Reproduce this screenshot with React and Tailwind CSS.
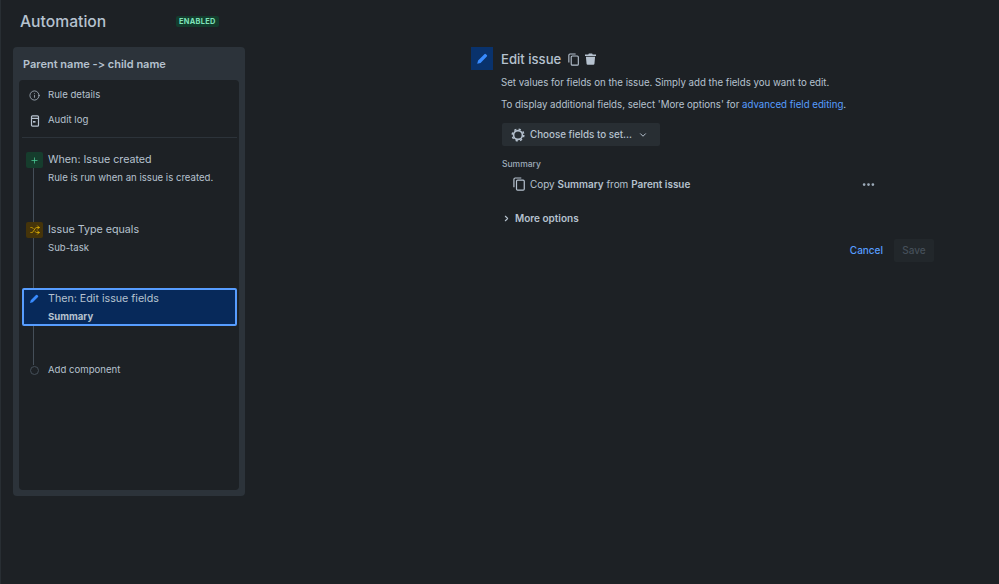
import { ChevronDown, ChevronRight, Info, MoreHorizontal, Plus, Shuffle } from "lucide-react";

function PencilIcon({ className }) {
  return (
    <svg className={className} viewBox="0 0 16 16" fill="currentColor">
      <path d="M11.2 1.6a1.4 1.4 0 0 1 2 0l1.2 1.2a1.4 1.4 0 0 1 0 2L6 13.2 1.6 14.4 2.8 10z" />
    </svg>
  );
}

function AuditIcon() {
  return (
    <svg className="w-[10px] h-[12px] text-[#b6c2cf]" viewBox="0 0 10 12" fill="none" stroke="currentColor" strokeWidth="1.2">
      <rect x="1.5" y="0.8" width="7" height="10.4" rx="1" />
      <path d="M1.5 3.4h7" />
      <path d="M3 6h2.5v1.6H3z" fill="currentColor" stroke="none" />
    </svg>
  );
}

function CopyIcon({ className }) {
  return (
    <svg className={className} viewBox="0 0 13 15" fill="none" stroke="currentColor" strokeWidth="1.3">
      <path d="M1 11V2.4A1.4 1.4 0 0 1 2.4 1H9" />
      <rect x="3.8" y="3.4" width="8.4" height="10.8" rx="1.2" />
    </svg>
  );
}

function TrashIcon({ className }) {
  return (
    <svg className={className} viewBox="0 0 12 13" fill="currentColor">
      <path d="M4.2 0.5h3.6l.6 1.1H12v1.5H0V1.6h3.6z" />
      <path d="M1 4h10l-.7 7.8a1.2 1.2 0 0 1-1.2 1.1H2.9a1.2 1.2 0 0 1-1.2-1.1z" />
    </svg>
  );
}

function GearIcon({ className }) {
  return (
    <svg className={className} viewBox="0 0 14 14" fill="none" stroke="currentColor">
      <circle cx="7" cy="7" r="4.4" strokeWidth="1.6" />
      <circle cx="7" cy="7" r="5.8" strokeWidth="1.5" strokeDasharray="2.2 2.35" />
    </svg>
  );
}

function Step({ icon, title, sub, box, bold, selected }) {
  return (
    <div
      className={
        selected
          ? "relative flex h-[38px] items-center rounded-[2px] border-2 border-[#579dff] bg-[#07295a] pt-[1px]"
          : "relative flex h-[38px] items-center"
      }
    >
      <div className={selected ? "flex h-full w-[24px] justify-center pr-[5px]" : "flex h-full w-[26px] justify-center pt-[2px] pr-[1px]"}>
        <div className={"flex h-[16px] w-[17px] items-center justify-center rounded-[2px] " + box}>{icon}</div>
      </div>
      <div className="flex flex-col">
        <span className="text-[10.7px] leading-[18px] text-[#b6c2cf]">{title}</span>
        <span className={"text-[9.6px] leading-[18px] text-[#b6c2cf] " + (bold ? "font-bold" : "")}>{sub}</span>
      </div>
    </div>
  );
}

export default function App() {
  return (
    <div className="flex h-[584px] w-[999px] overflow-hidden border-l border-[#282e33] bg-[#1d2125] font-['Inter',sans-serif] text-[#b6c2cf]">
      <aside className="flex w-[470px] shrink-0 flex-col pl-[12px]">
        <div className="flex h-[47px] items-center pb-[4px] pl-[7px]">
          <h1 className="w-[156px] text-[15.7px] font-medium text-[#b6c2cf]">Automation</h1>
          <span className="rounded-[2px] bg-[#133d2d] px-[3px] text-[7.4px] font-bold leading-[11px] tracking-[0.3px] text-[#7ee2b8]">
            ENABLED
          </span>
        </div>

        <div className="flex h-[449px] w-[232px] flex-col rounded-[4px] bg-[#2c333a] px-[6px] pb-[6px]">
          <h2 className="flex h-[33px] items-center pl-[4px] pt-[1px] text-[11px] font-semibold text-[#b6c2cf] [font-feature-settings:'calt'_0]">
            Parent name -&gt; child name
          </h2>

          <div className="relative flex-1 rounded-[4px] bg-[#1d2125] pl-[3px] pr-[2px]">
            <div className="absolute left-[14px] top-[85px] h-[200px] w-px bg-[#454f59]" />

            <div className="flex h-[58px] flex-col border-b border-[#2c333a] pt-[3px]">
              <div className="flex h-[25px] items-center text-[9.6px]">
                <div className="flex w-[26px] justify-center pr-[1px]">
                  <Info size={11} strokeWidth={1.6} />
                </div>
                Rule details
              </div>
              <div className="flex h-[25px] items-center text-[9.6px]">
                <div className="flex w-[26px] justify-center pr-[1px]">
                  <AuditIcon />
                </div>
                Audit log
              </div>
            </div>

            <div className="relative flex flex-col pt-[12px]">
              <Step
                box="bg-[#163d2d]"
                icon={<Plus size={9} strokeWidth={2} className="text-[#4bce97]" />}
                title="When: Issue created"
                sub="Rule is run when an issue is created."
              />
              <div className="h-[32px]" />
              <Step
                box="bg-[#45340a]"
                icon={<Shuffle size={10} strokeWidth={2} className="text-[#e2b203]" />}
                title="Issue Type equals"
                sub="Sub-task"
              />
              <div className="h-[30px]" />
              <Step
                selected
                bold
                box=""
                icon={<PencilIcon className="h-[10px] w-[10px] text-[#388bff]" />}
                title="Then: Edit issue fields"
                sub="Summary"
              />
              <div className="flex h-[89px] items-center text-[9.6px]">
                <div className="flex w-[26px] justify-center pr-[1px]">
                  <div className="z-10 h-[9px] w-[9px] rounded-full border border-[#454f59] bg-[#1d2125]" />
                </div>
                Add component
              </div>
            </div>
          </div>
        </div>
      </aside>

      <main className="flex w-[470px] shrink-0 flex-col pt-[47px]">
        <div className="flex gap-[8px]">
          <div className="flex h-[23px] w-[22px] shrink-0 items-center justify-center bg-[#09326c]">
            <PencilIcon className="h-[12px] w-[12px] text-[#388bff]" />
          </div>
          <div className="flex flex-col pt-[1px]">
            <div className="flex h-[24px] items-center">
              <span className="mr-[7px] text-[13.1px] font-medium text-[#b6c2cf]">Edit issue</span>
              <CopyIcon className="mb-[2px] mr-[6px] h-[13px] w-[11px]" />
              <TrashIcon className="mb-[2px] h-[12px] w-[11px]" />
            </div>
            <p className="mt-[2px] text-[9.68px] leading-[18px]">Set values for fields on the issue. Simply add the fields you want to edit.</p>
            <p className="mt-[4px] text-[9.68px] leading-[18px]">
              To display additional fields, select &apos;More options&apos; for{" "}
              <span className="text-[#579dff]">advanced field editing</span>.
            </p>
          </div>
        </div>

        <div className="ml-[31px] mt-[9px] flex h-[23px] w-[158px] items-center rounded-[2px] bg-[#282e33] pl-[9px] text-[9.8px] font-medium">
          <GearIcon className="mr-[5px] h-[14px] w-[14px]" />
          <span className="pt-[1px]">Choose fields to set...</span>
          <ChevronDown size={10} strokeWidth={2.4} className="ml-[6px]" />
        </div>

        <div className="ml-[31px] mt-[12px] text-[8.5px] font-medium leading-[12px] text-[#9fadbc]">Summary</div>

        <div className="ml-[42px] mt-[6px] flex h-[16px] w-[363px] items-center text-[9.95px]">
          <CopyIcon className="mr-[5px] h-[14px] w-[12px]" />
          <span>
            Copy <b className="font-semibold">Summary</b> from <b className="font-semibold">Parent issue</b>
          </span>
          <MoreHorizontal size={15} strokeWidth={2.4} className="ml-auto text-[#9fadbc]" />
        </div>

        <div className="ml-[31px] mt-[18px] flex h-[16px] items-center text-[10px] font-semibold">
          <ChevronRight size={9} strokeWidth={3} className="mr-[4px]" />
          More options
        </div>

        <div className="mt-[13px] flex w-[463px] items-center justify-end gap-[11px] text-[10px] font-medium">
          <span className="text-[#579dff]">Cancel</span>
          <span className="flex h-[23px] w-[40px] items-center justify-center rounded-[2px] bg-[#22272b] text-[#454f59]">Save</span>
        </div>
      </main>
    </div>
  );
}
